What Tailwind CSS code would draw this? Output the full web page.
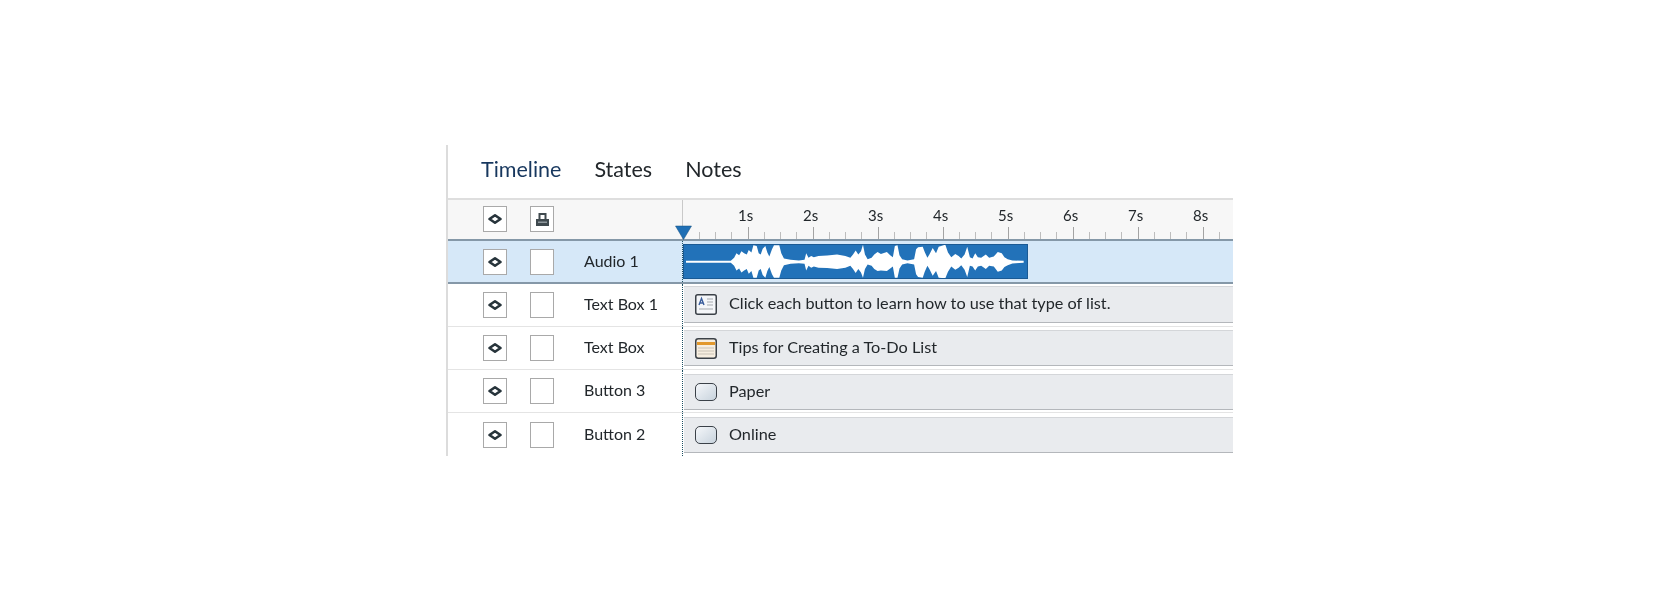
<!DOCTYPE html>
<html lang="en">
<head>
    <meta charset="UTF-8">
    <title>Timeline</title>
    <script src="https://cdn.jsdelivr.net/npm/@tailwindcss/browser@4"></script>
</head>
<body class="bg-white font-['Lato',sans-serif] text-[#22272b] h-[601px] overflow-hidden">

    <div class="ml-[446px] mt-[145px] w-[787px] border-l-2 border-[#dcdcdc] relative blur-[0.3px]">

        <!-- tabs -->
        <div class="h-[53px] flex items-center gap-[33px] pl-[33px] pb-[5px] text-[21.5px]">
            <span class="text-[#17375e]">Timeline</span>
            <span>States</span>
            <span>Notes</span>
        </div>

        <!-- ruler row -->
        <div class="h-[41px] flex bg-[#f7f7f7] border-t-2 border-[#dedede]">
            <div class="w-[234px] shrink-0 flex items-center gap-[23px] pl-[35px] pb-[1px]">
                <div class="w-[24px] h-[26px] bg-white border border-[#a9a9a9] flex items-center justify-center">
                    <svg width="16" height="12" viewBox="0 0 16 12"><path d="M2.5 6 L8 2.2 L13.5 6 L8 9.8Z" fill="#fff" stroke="#27343b" stroke-width="2.6" stroke-linejoin="round"/></svg>
                </div>
                <div class="w-[24px] h-[26px] bg-white border border-[#a9a9a9] flex items-center justify-center">
                    <svg width="15" height="15" viewBox="0 0 15 15"><path d="M4.5 7V2H10.5V7" fill="none" stroke="#3f494e" stroke-width="2"/><rect x="1" y="7" width="13" height="7" fill="#3f494e"/><rect x="3" y="9.5" width="9" height="1.5" fill="#8f989d"/></svg>
                </div>
            </div>
            <div class="flex-1 min-w-0 border-l border-[#c9c9c9] relative overflow-hidden">
                <div class="flex pl-[55px] pt-[5px] text-[15px] leading-[20px]">
                    <span class="w-[65px] shrink-0">1s</span>
                    <span class="w-[65px] shrink-0">2s</span>
                    <span class="w-[65px] shrink-0">3s</span>
                    <span class="w-[65px] shrink-0">4s</span>
                    <span class="w-[65px] shrink-0">5s</span>
                    <span class="w-[65px] shrink-0">6s</span>
                    <span class="w-[65px] shrink-0">7s</span>
                    <span class="w-[65px] shrink-0">8s</span>
                </div>
                <svg class="absolute left-0 bottom-0" width="552" height="14">
                    <defs>
                        <pattern id="ticks" width="65" height="14" patternUnits="userSpaceOnUse">
                            <rect x="0" y="2" width="1" height="12" fill="#a3a3a3"/>
                            <rect x="16" y="7" width="1" height="7" fill="#bdbdbd"/>
                            <rect x="32" y="7" width="1" height="7" fill="#bdbdbd"/>
                            <rect x="48" y="7" width="1" height="7" fill="#bdbdbd"/>
                        </pattern>
                    </defs>
                    <rect x="1" width="551" height="14" fill="url(#ticks)"/>
                </svg>
            </div>
        </div>

        <!-- audio row -->
        <div class="h-[45px] flex items-center bg-[#d6e8f8] border-y-2 border-[#8598a8] text-[16px]">
            <div class="w-[234px] shrink-0 flex items-center gap-[23px] pl-[35px]">
                <div class="w-[24px] h-[26px] bg-white border border-[#a9a9a9] flex items-center justify-center">
                    <svg width="16" height="12" viewBox="0 0 16 12"><path d="M2.5 6 L8 2.2 L13.5 6 L8 9.8Z" fill="#fff" stroke="#27343b" stroke-width="2.6" stroke-linejoin="round"/></svg>
                </div>
                <div class="w-[24px] h-[26px] bg-white border border-[#a9a9a9]"></div>
                <span class="ml-[7px] mb-[2px]">Audio 1</span>
            </div>
            <div class="flex-1 h-full border-l border-dotted border-[#1d4f63] py-[3px]">
                <div class="w-[345px] h-[35px] bg-[#2272b9] border border-[#1b5a94]">
                    <svg class="w-full h-full" viewBox="39 147 1033 100" preserveAspectRatio="none">
                        <polygon fill="#fff" points="45,195 180,195 190,186 197,172 205,178 212,166 220,172 228,176 234,162 242,170 248,148 258,150 264,172 270,176 276,158 284,150 290,170 296,182 304,160 310,148 326,148 332,172 340,188 360,192 385,194 402,192 407,172 414,186 422,180 430,184 444,180 470,179 500,176 525,180 540,186 548,176 556,164 564,176 572,166 578,146 584,176 592,190 604,186 612,176 622,168 632,174 650,168 660,178 668,184 674,150 682,148 688,178 696,190 712,194 732,190 738,160 744,154 758,152 764,168 772,186 778,176 788,156 798,172 806,152 826,146 834,170 844,184 856,174 866,180 874,188 884,176 892,152 900,184 908,188 916,172 924,184 934,186 948,176 958,186 972,182 984,168 996,172 1004,184 1014,190 1028,194 1062,195 1062,201 1028,203 1014,208 1004,214 996,224 984,228 972,212 958,210 948,220 934,210 924,212 916,224 908,212 900,210 892,244 884,222 874,208 866,216 856,222 844,212 834,228 826,248 806,246 798,226 788,240 778,220 772,210 764,228 758,246 744,244 738,236 732,206 712,202 696,206 688,218 682,246 674,246 668,212 660,218 650,226 632,224 622,226 612,220 604,210 592,206 584,220 578,246 572,230 564,220 556,232 548,220 540,210 525,216 500,220 470,217 444,216 430,212 422,216 414,210 407,224 402,204 385,202 360,204 340,208 332,224 326,246 310,246 304,236 296,214 290,226 284,246 276,238 270,220 264,224 258,246 248,246 242,226 234,234 228,220 220,224 212,230 205,218 197,224 190,210 180,201 45,201"/>
                    </svg>
                </div>
            </div>
        </div>

        <!-- text box 1 -->
        <div class="h-[43px] flex items-center border-b border-[#e4e4e4] text-[16px]">
            <div class="w-[234px] shrink-0 flex items-center gap-[23px] pl-[35px]">
                <div class="w-[24px] h-[26px] bg-white border border-[#a9a9a9] flex items-center justify-center">
                    <svg width="16" height="12" viewBox="0 0 16 12"><path d="M2.5 6 L8 2.2 L13.5 6 L8 9.8Z" fill="#fff" stroke="#27343b" stroke-width="2.6" stroke-linejoin="round"/></svg>
                </div>
                <div class="w-[24px] h-[26px] bg-white border border-[#a9a9a9]"></div>
                <span class="ml-[7px] mb-[2px]">Text Box 1</span>
            </div>
            <div class="flex-1 h-full border-l border-dotted border-[#1d4f63] pt-[2px]">
                <div class="h-[37px] ml-[1px] bg-[#e9ebee] border-y border-t-[#d4d6d9] border-b-[#b4b7bb] flex items-center pl-[11px] gap-[12px] text-[16.25px]">
                    <svg width="22" height="21" viewBox="0 0 22 21"><rect x="0.75" y="0.75" width="20.5" height="19.5" rx="2" fill="#f4f6f9" stroke="#3b4148" stroke-width="1.5"/><path d="M4 11 L6.5 4.5 L9 11 M5 9 H8" fill="none" stroke="#3a5d9c" stroke-width="1.4"/><path d="M12 5H18M12 8H18M12 11H18M4 15H18" stroke="#a5a9ae" stroke-width="1"/></svg>
                    <span class="mb-[2px]">Click each button to learn how to use that type of list.</span>
                </div>
            </div>
        </div>

        <!-- text box -->
        <div class="h-[43px] flex items-center border-b border-[#e4e4e4] text-[16px]">
            <div class="w-[234px] shrink-0 flex items-center gap-[23px] pl-[35px]">
                <div class="w-[24px] h-[26px] bg-white border border-[#a9a9a9] flex items-center justify-center">
                    <svg width="16" height="12" viewBox="0 0 16 12"><path d="M2.5 6 L8 2.2 L13.5 6 L8 9.8Z" fill="#fff" stroke="#27343b" stroke-width="2.6" stroke-linejoin="round"/></svg>
                </div>
                <div class="w-[24px] h-[26px] bg-white border border-[#a9a9a9]"></div>
                <span class="ml-[7px] mb-[2px]">Text Box</span>
            </div>
            <div class="flex-1 h-full border-l border-dotted border-[#1d4f63] pt-[3px]">
                <div class="h-[36px] ml-[1px] bg-[#e9ebee] border-y border-t-[#d4d6d9] border-b-[#b4b7bb] flex items-center pl-[11px] gap-[12px] text-[16.25px]">
                    <svg width="22" height="21" viewBox="0 0 22 21"><rect x="0.75" y="0.75" width="20.5" height="19.5" rx="2.5" fill="#f7eee0" stroke="#3b4148" stroke-width="1.5"/><rect x="2" y="4" width="18" height="3" fill="#e2982c"/><path d="M3 10H19M3 13H19M3 16H19" stroke="#c9c2b6" stroke-width="1"/></svg>
                    <span class="mb-[2px]">Tips for Creating a To-Do List</span>
                </div>
            </div>
        </div>

        <!-- button 3 -->
        <div class="h-[43px] flex items-center border-b border-[#e4e4e4] text-[16px]">
            <div class="w-[234px] shrink-0 flex items-center gap-[23px] pl-[35px]">
                <div class="w-[24px] h-[26px] bg-white border border-[#a9a9a9] flex items-center justify-center">
                    <svg width="16" height="12" viewBox="0 0 16 12"><path d="M2.5 6 L8 2.2 L13.5 6 L8 9.8Z" fill="#fff" stroke="#27343b" stroke-width="2.6" stroke-linejoin="round"/></svg>
                </div>
                <div class="w-[24px] h-[26px] bg-white border border-[#a9a9a9]"></div>
                <span class="ml-[7px] mb-[2px]">Button 3</span>
            </div>
            <div class="flex-1 h-full border-l border-dotted border-[#1d4f63] pt-[4px]">
                <div class="h-[36px] ml-[1px] bg-[#e9ebee] border-y border-t-[#d4d6d9] border-b-[#b4b7bb] flex items-center pl-[11px] gap-[12px] text-[16.25px]">
                    <div class="w-[22px] h-[18px] rounded-[5px] border-[1.5px] border-[#3b4148] bg-linear-to-br from-[#f5f7fa] to-[#c8d3dd]"></div>
                    <span class="mb-[2px]">Paper</span>
                </div>
            </div>
        </div>

        <!-- button 2 -->
        <div class="h-[43px] flex items-center text-[16px]">
            <div class="w-[234px] shrink-0 flex items-center gap-[23px] pl-[35px]">
                <div class="w-[24px] h-[26px] bg-white border border-[#a9a9a9] flex items-center justify-center">
                    <svg width="16" height="12" viewBox="0 0 16 12"><path d="M2.5 6 L8 2.2 L13.5 6 L8 9.8Z" fill="#fff" stroke="#27343b" stroke-width="2.6" stroke-linejoin="round"/></svg>
                </div>
                <div class="w-[24px] h-[26px] bg-white border border-[#a9a9a9]"></div>
                <span class="ml-[7px] mb-[2px]">Button 2</span>
            </div>
            <div class="flex-1 h-full border-l border-dotted border-[#1d4f63] pt-[4px]">
                <div class="h-[36px] ml-[1px] bg-[#e9ebee] border-y border-t-[#d4d6d9] border-b-[#b4b7bb] flex items-center pl-[11px] gap-[12px] text-[16.25px]">
                    <div class="w-[22px] h-[18px] rounded-[5px] border-[1.5px] border-[#3b4148] bg-linear-to-br from-[#f5f7fa] to-[#c8d3dd]"></div>
                    <span class="mb-[2px]">Online</span>
                </div>
            </div>
        </div>

        <!-- playhead -->
        <svg class="absolute left-[227px] top-[80px]" width="17" height="15" viewBox="0 0 17 15"><path d="M0.5 1H16.5L8.5 14.5Z" fill="#1f6fb5" stroke="#17507f" stroke-width="0.5"/></svg>
    </div>
</body>
</html>
